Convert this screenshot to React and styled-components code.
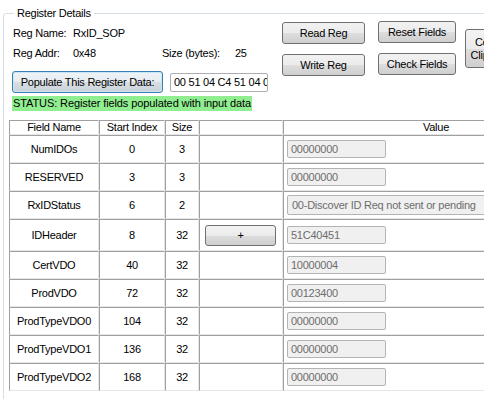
import React from 'react'
import styled, { createGlobalStyle } from 'styled-components';

const GlobalStyle = createGlobalStyle`
  html, body {
    margin: 0;
    padding: 0;
    background: #ffffff;
    overflow: hidden;
  }
  body {
    width: 484px;
    height: 399px;
    font-family: "Liberation Sans", Arial, sans-serif;
    font-size: 11px;
    letter-spacing: -0.25px;
    color: #000000;
  }
`;

const fields = [
  { name: 'NumIDOs', start: 0, size: 3, value: '00000000' },
  { name: 'RESERVED', start: 3, size: 3, value: '00000000' },
  { name: 'RxIDStatus', start: 6, size: 2, value: '00-Discover ID Req not sent or pending', combo: true },
  { name: 'IDHeader', start: 8, size: 32, value: '51C40451', expand: true },
  { name: 'CertVDO', start: 40, size: 32, value: '10000004' },
  { name: 'ProdVDO', start: 72, size: 32, value: '00123400' },
  { name: 'ProdTypeVDO0', start: 104, size: 32, value: '00000000' },
  { name: 'ProdTypeVDO1', start: 136, size: 32, value: '00000000' },
  { name: 'ProdTypeVDO2', start: 168, size: 32, value: '00000000' },
];

function App() {
  return (
    <>
      <GlobalStyle />
      <Group>
        <Legend>Register Details</Legend>
        <Top>
          <Info>
            <InfoRow>
              <Label $w={60}>Reg Name:</Label>
              <span>RxID_SOP</span>
            </InfoRow>
            <InfoRow $gap={7}>
              <Label $w={60}>Reg Addr:</Label>
              <Label $w={89}>0x48</Label>
              <Label $w={73}>Size (bytes):</Label>
              <span>25</span>
            </InfoRow>
            <PopulateRow>
              <PrimaryButton $w={151}>Populate This Register Data:</PrimaryButton>
              <DataBox>00 51 04 C4 51 04 00 00</DataBox>
            </PopulateRow>
            <Status>STATUS: Register fields populated with input data</Status>
          </Info>
          <ButtonCol $top={-5} $w={83} $right={13}>
            <Button $w={83}>Read Reg</Button>
            <Button $w={83}>Write Reg</Button>
          </ButtonCol>
          <ButtonCol $top={-6} $w={79} $right={8}>
            <Button $w={78}>Reset Fields</Button>
            <Button $w={78}>Check Fields</Button>
          </ButtonCol>
          <CopyButton>Copy to<br />Clipboard</CopyButton>
        </Top>
        <Grid>
          <colgroup>
            <col style={{ width: 90 }} />
            <col style={{ width: 66 }} />
            <col style={{ width: 34 }} />
            <col style={{ width: 84 }} />
            <col style={{ width: 306 }} />
          </colgroup>
          <thead>
            <tr>
              <Head>Field Name</Head>
              <Head>Start Index</Head>
              <Head>Size</Head>
              <Head></Head>
              <Head>Value</Head>
            </tr>
          </thead>
          <tbody>
            {fields.map((f) => (
              <tr key={f.name}>
                <Cell $h={f.expand ? 32 : 28}>{f.name}</Cell>
                <Cell>{f.start}</Cell>
                <Cell>{f.size}</Cell>
                <ActionCell>
                  {f.expand && <ExpandButton>+</ExpandButton>}
                </ActionCell>
                <ValueCell>
                  {f.combo ? <ComboBox>{f.value}</ComboBox> : <ValueBox>{f.value}</ValueBox>}
                </ValueCell>
              </tr>
            ))}
          </tbody>
        </Grid>
      </Group>
    </>
  )
}

const Group = styled.fieldset`
  margin: 7px 0 0 3px;
  padding: 7px 0 0 8px;
  width: 640px;
  height: 420px;
  min-width: 0;
  border: 1px solid #d5dfe5;
  border-radius: 3px;
`;

const Legend = styled.legend`
  margin-left: 2px;
  padding: 0 3px;
  line-height: 13px;
  height: 13px;
`;

const Top = styled.div`
  display: flex;
  align-items: flex-start;
`;

const Info = styled.div`
  flex: 0 0 270px;
  display: flex;
  flex-direction: column;
  align-items: flex-start;
`;

const InfoRow = styled.div`
  display: flex;
  line-height: 13px;
  margin-top: ${p => p.$gap || 0}px;
  padding-left: 1px;
`;

const Label = styled.span`
  width: ${p => p.$w}px;
`;

const PopulateRow = styled.div`
  display: flex;
  align-items: center;
  gap: 7px;
  margin-top: 11px;
`;

const Button = styled.button`
  box-sizing: border-box;
  width: ${p => p.$w}px;
  height: 22px;
  padding: 0;
  border: 1px solid #707070;
  border-radius: 3px;
  background: linear-gradient(#f2f2f2 0%, #ebebeb 50%, #dddddd 51%, #cfcfcf 100%);
  font: 11px "Liberation Sans", Arial, sans-serif;
  letter-spacing: -0.25px;
  color: #000000;
  white-space: nowrap;
`;

const PrimaryButton = styled(Button)`
  border-color: #3c7fb1;
  box-shadow: inset 0 0 0 1px #c9e6f7;
  background: linear-gradient(#eef3f6 0%, #e6ecf0 50%, #d8dfe4 51%, #cbd3d8 100%);
`;

const DataBox = styled.div`
  box-sizing: border-box;
  width: 98px;
  height: 19px;
  padding: 2px 0 0 3px;
  border: 1px solid #abadb3;
  border-radius: 2px;
  background: #ffffff;
  line-height: 13px;
  white-space: nowrap;
  overflow: hidden;
`;

const Status = styled.div`
  margin-top: 3px;
  padding: 0 1px;
  height: 15px;
  line-height: 15px;
  letter-spacing: -0.1px;
  background: #90ee90;
  white-space: nowrap;
`;

const ButtonCol = styled.div`
  flex: 0 0 ${p => p.$w}px;
  display: flex;
  flex-direction: column;
  gap: 10px;
  margin-top: ${p => p.$top}px;
  margin-right: ${p => p.$right}px;
`;

const CopyButton = styled(Button)`
  flex: 0 0 56px;
  height: 39px;
  margin-top: 2px;
  line-height: 13px;
  padding-top: 1px;
`;

const Grid = styled.table`
  margin: 9px 0 0 -3px;
  width: 580px;
  table-layout: fixed;
  border-collapse: separate;
  border-spacing: 0;
`;

const Head = styled.th`
  box-sizing: border-box;
  height: 15px;
  padding: 0;
  font-weight: normal;
  line-height: 13px;
  text-align: center;
  border-left: 1px solid #a0a0a0;
  border-top: 1px solid #a0a0a0;
  border-right: 1px solid #e6e6e6;
  border-bottom: 1px solid #e6e6e6;
`;

const Cell = styled.td`
  box-sizing: border-box;
  height: ${p => p.$h || 28}px;
  padding: 0;
  text-align: center;
  vertical-align: middle;
  white-space: nowrap;
  border-left: 1px solid #a0a0a0;
  border-top: 1px solid #a0a0a0;
  border-right: 1px solid #e6e6e6;
  border-bottom: 1px solid #e6e6e6;
`;

const ActionCell = styled(Cell)`
  text-align: left;
  padding-left: 5px;
`;

const ValueCell = styled(Cell)`
  text-align: left;
  padding-left: 3px;
  overflow: hidden;
`;

const ExpandButton = styled(Button)`
  display: block;
  width: 71px;
  height: 21px;
`;

const ValueBox = styled.div`
  box-sizing: border-box;
  width: 99px;
  height: 18px;
  padding: 1px 0 0 3px;
  border: 1px solid #b4b4b4;
  border-radius: 2px;
  background: #f0f0f0;
  color: #6d6d6d;
  line-height: 14px;
  white-space: nowrap;
`;

const ComboBox = styled(ValueBox)`
  width: 300px;
  height: 20px;
  padding-top: 2px;
  padding-left: 4px;
`;

export default App;
